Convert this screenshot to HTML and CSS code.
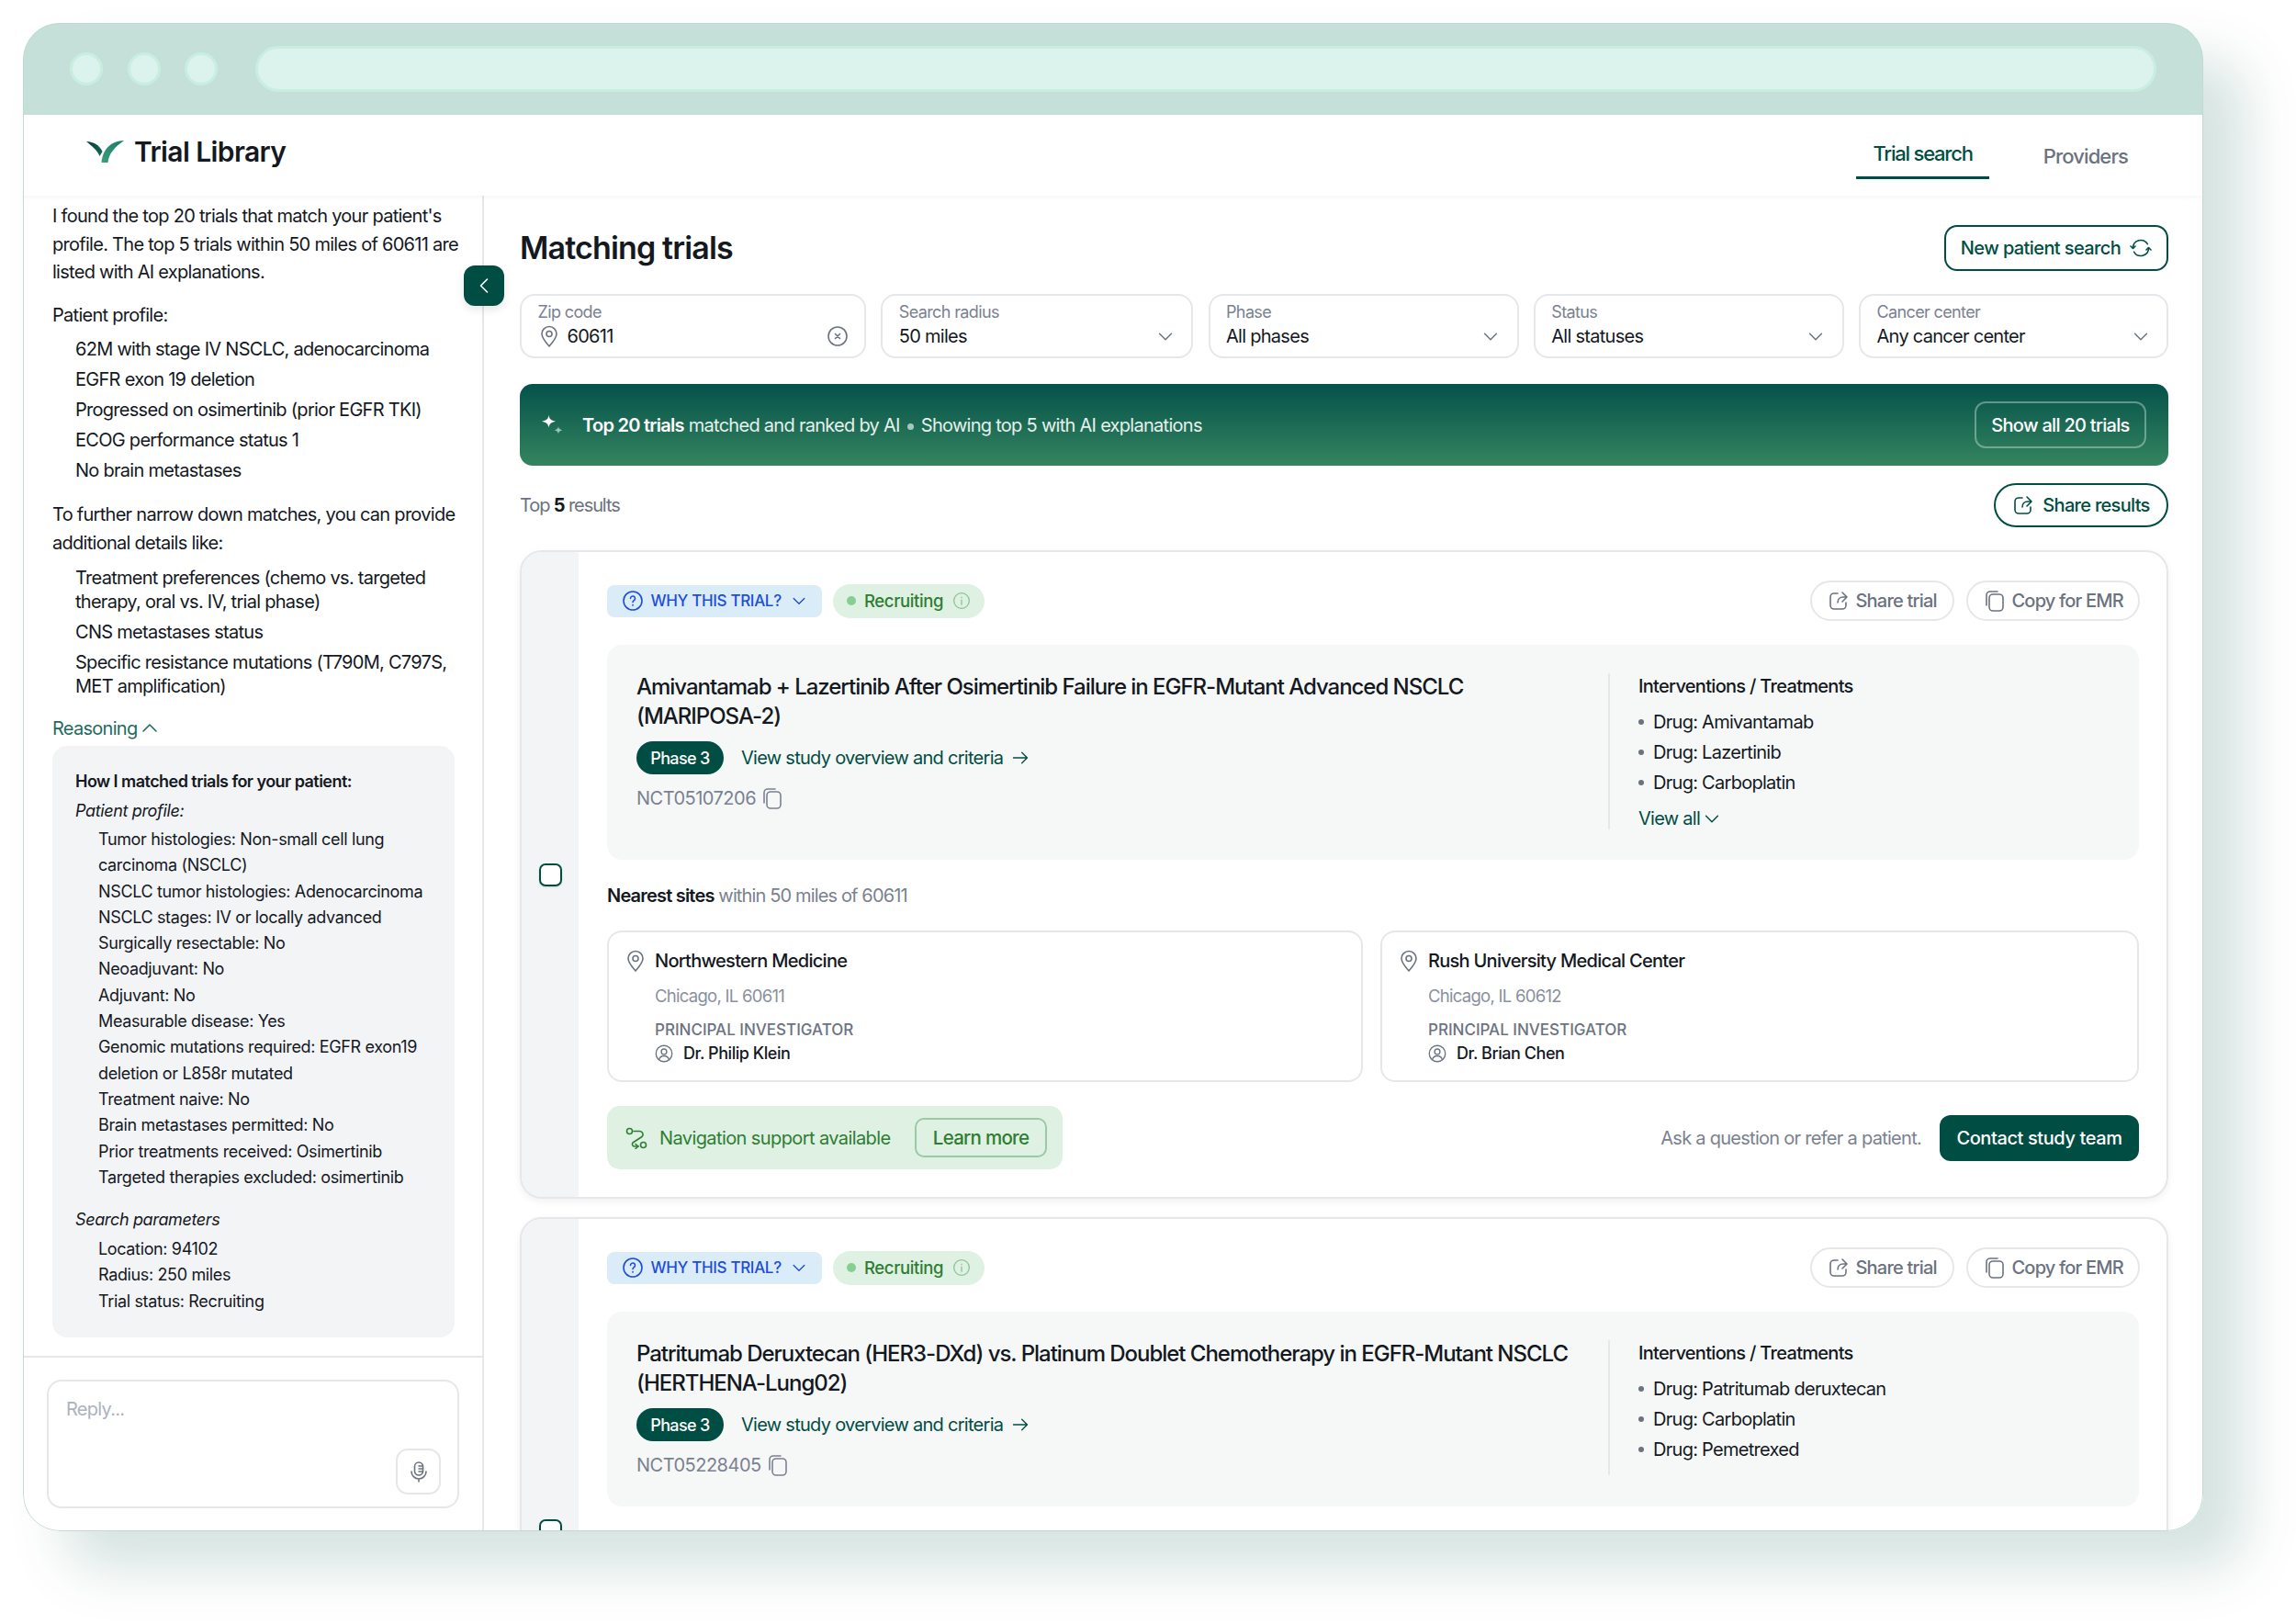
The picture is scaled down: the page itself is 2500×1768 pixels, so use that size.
FILE: index.html
```html
<!DOCTYPE html>
<html lang="en">
<head>
<meta charset="utf-8">
<title>Trial Library</title>
<link rel="stylesheet" href="styles.css">
</head>
<body>
<svg class="sprite" xmlns="http://www.w3.org/2000/svg">
  <symbol id="i-pin" viewBox="0 0 24 24"><path d="M12 23C8 18.500 4 14 4 9.500a8 8 0 0 1 16 0C20 14 16 18.500 12 23z"/><circle cx="12" cy="9.500" r="3"/></symbol>
  <symbol id="i-x" viewBox="0 0 24 24"><circle cx="12" cy="12" r="10"/><path d="M9.500 9.500l5 5M14.500 9.500l-5 5"/></symbol>
  <symbol id="i-chev" viewBox="0 0 24 24"><path d="M5 9l7 7 7-7"/></symbol>
  <symbol id="i-chev-up" viewBox="0 0 24 24"><path d="M5 15l7-7 7 7"/></symbol>
  <symbol id="i-chev-left" viewBox="0 0 24 24"><path d="M15.500 5l-7 7 7 7"/></symbol>
  <symbol id="i-refresh" viewBox="0 0 24 24"><path d="M3.500 12a8.500 8.500 0 0 1 15.800-4.300M20.500 12a8.500 8.500 0 0 1-15.800 4.300"/><path d="M1 10l2.500 2.500L6 10M18 14l2.500-2.500L23 14"/></symbol>
  <symbol id="i-q" viewBox="0 0 24 24"><circle cx="12" cy="12" r="10"/><path d="M9.500 9.500a2.500 2.500 0 1 1 3.800 2.100c-.9.600-1.300 1.100-1.300 2"/><path d="M12 16.500v.6"/></symbol>
  <symbol id="i-info" viewBox="0 0 24 24"><circle cx="12" cy="12" r="10"/><path d="M12 11v6M12 7.500v.5"/></symbol>
  <symbol id="i-share" viewBox="0 0 24 24"><path d="M11 4H7a4 4 0 0 0-4 4v9a4 4 0 0 0 4 4h9a4 4 0 0 0 4-4v-3"/><path d="M21 8l-5-5M21 8l-5 5M21 8h-4c-4 0-6 3-6 6"/></symbol>
  <symbol id="i-copy" viewBox="0 0 24 24"><rect x="6" y="5" width="15" height="18" rx="4"/><path d="M3 17V6a4 4 0 0 1 4-4h8"/></symbol>
  <symbol id="i-user" viewBox="0 0 24 24"><circle cx="12" cy="12" r="10.500"/><circle cx="12" cy="9.500" r="3.500"/><path d="M5.500 20c1-3.500 3.500-5 6.500-5s5.500 1.500 6.500 5"/></symbol>
  <symbol id="i-route" viewBox="0 0 24 24"><circle cx="4.500" cy="4.500" r="3"/><circle cx="19.500" cy="19.500" r="3"/><path d="M9 4.500h6.500a3.500 3.500 0 0 1 2.500 6L8 17a2.500 2.500 0 0 0 1.500 4H14"/><path d="M11 18.500L14 21l-3 2.500"/></symbol>
  <symbol id="i-mic" viewBox="0 0 24 24"><rect x="7.500" y="2" width="9" height="14" rx="4.500"/><path d="M12 6h4.500M12 9h4.500M12 12h4.500"/><path d="M4 12a8 8 0 0 0 16 0M12 20v3"/></symbol>
  <symbol id="i-arrow" viewBox="0 0 24 24"><path d="M3 12h18M14 5l7 7-7 7"/></symbol>
  <symbol id="i-spark" viewBox="0 0 24 24"><path d="M7.500 1c.8 4.200 2.400 5.600 7.500 6.800-5.100 1.200-6.700 2.600-7.500 6.800-.8-4.200-2.400-5.600-7.500-6.800C5.100 6.600 6.700 5.200 7.500 1z"/><path class="spark-small" d="M18 13c.4 2.600 1.200 3.400 4.500 4.300-3.300.9-4.100 1.700-4.500 4.300-.4-2.600-1.200-3.400-4.500-4.300 3.300-.9 4.100-1.700 4.500-4.300z"/></symbol>
</svg>

<div class="page">
  <div class="window">
    <div class="titlebar">
      <span class="dot"></span><span class="dot"></span><span class="dot"></span>
      <span class="urlbar"></span>
    </div>

    <header class="appbar">
      <div class="brand">
        <svg class="logo" viewBox="0 0 41 24" xmlns="http://www.w3.org/2000/svg">
          <defs>
            <linearGradient id="leafA" x1="0" y1="0" x2="1" y2="1"><stop offset="0" stop-color="#0a3f38"/><stop offset="1" stop-color="#0f6a58"/></linearGradient>
            <linearGradient id="leafB" x1="1" y1="0" x2="0" y2="1"><stop offset="0" stop-color="#1a7a64"/><stop offset="1" stop-color="#3e9f7c"/></linearGradient>
          </defs>
          <path fill="url(#leafA)" d="M0 1c8 .5 14.500 4 17.500 11l-3 5C12 10.500 6.500 6.500 0 1z"/>
          <path fill="url(#leafB)" d="M41 0C28 .5 18 8 16.500 24h7C24.500 14 31 7 41 0z"/>
        </svg>
        <span class="brand-name">Trial Library</span>
      </div>
      <nav class="tabs">
        <a class="tab tab-active">Trial search</a>
        <a class="tab tab-muted">Providers</a>
      </nav>
    </header>

    <div class="workspace">
      <aside class="side">
        <div class="side-scroll">
          <p class="msg">I found the top 20 trials that match your patient's<br>profile. The top 5 trials within 50 miles of 60611 are<br>listed with AI explanations.</p>
          <p class="msg msg-gap">Patient profile:</p>
          <ul class="plain-list">
            <li>62M with stage IV NSCLC, adenocarcinoma</li>
            <li>EGFR exon 19 deletion</li>
            <li>Progressed on osimertinib (prior EGFR TKI)</li>
            <li>ECOG performance status 1</li>
            <li>No brain metastases</li>
          </ul>
          <p class="msg msg-gap2">To further narrow down matches, you can provide<br>additional details like:</p>
          <ul class="plain-list plain-list-2">
            <li>Treatment preferences (chemo vs. targeted<br>therapy, oral vs. IV, trial phase)</li>
            <li>CNS metastases status</li>
            <li>Specific resistance mutations (T790M, C797S,<br>MET amplification)</li>
          </ul>
          <div class="reasoning-toggle">Reasoning <svg class="ic ic-24"><use href="#i-chev-up"/></svg></div>
          <div class="reasoning">
            <p class="r-head">How I matched trials for your patient:</p>
            <p class="r-sub">Patient profile:</p>
            <ul class="r-list">
              <li>Tumor histologies: Non-small cell lung<br>carcinoma (NSCLC)</li>
              <li>NSCLC tumor histologies: Adenocarcinoma</li>
              <li>NSCLC stages: IV or locally advanced</li>
              <li>Surgically resectable: No</li>
              <li>Neoadjuvant: No</li>
              <li>Adjuvant: No</li>
              <li>Measurable disease: Yes</li>
              <li>Genomic mutations required: EGFR exon19<br>deletion or L858r mutated</li>
              <li>Treatment naive: No</li>
              <li>Brain metastases permitted: No</li>
              <li>Prior treatments received: Osimertinib</li>
              <li>Targeted therapies excluded: osimertinib</li>
            </ul>
            <p class="r-sub r-sub-gap">Search parameters</p>
            <ul class="r-list r-list-2">
              <li>Location: 94102</li>
              <li>Radius: 250 miles</li>
              <li>Trial status: Recruiting</li>
            </ul>
          </div>
        </div>
        <div class="composer">
          <div class="reply">
            <span class="reply-hint">Reply...</span>
            <button class="mic"><svg class="ic ic-24"><use href="#i-mic"/></svg></button>
          </div>
        </div>
        <button class="collapse"><svg class="ic ic-24"><use href="#i-chev-left"/></svg></button>
      </aside>

      <main class="main">
        <div class="head-row">
          <h1 class="title">Matching trials</h1>
          <button class="btn-outline">New patient search <svg class="ic ic-24"><use href="#i-refresh"/></svg></button>
        </div>

        <div class="filters">
          <div class="filter">
            <span class="f-label">Zip code</span>
            <div class="f-value"><svg class="ic ic-24 ic-grey"><use href="#i-pin"/></svg><span class="f-text">60611</span><svg class="ic ic-24 ic-grey f-end"><use href="#i-x"/></svg></div>
          </div>
          <div class="filter">
            <span class="f-label">Search radius</span>
            <div class="f-value"><span class="f-text">50 miles</span><svg class="ic ic-22 ic-grey f-end"><use href="#i-chev"/></svg></div>
          </div>
          <div class="filter">
            <span class="f-label">Phase</span>
            <div class="f-value"><span class="f-text">All phases</span><svg class="ic ic-22 ic-grey f-end"><use href="#i-chev"/></svg></div>
          </div>
          <div class="filter">
            <span class="f-label">Status</span>
            <div class="f-value"><span class="f-text">All statuses</span><svg class="ic ic-22 ic-grey f-end"><use href="#i-chev"/></svg></div>
          </div>
          <div class="filter">
            <span class="f-label">Cancer center</span>
            <div class="f-value"><span class="f-text">Any cancer center</span><svg class="ic ic-22 ic-grey f-end"><use href="#i-chev"/></svg></div>
          </div>
        </div>

        <div class="banner">
          <svg class="spark" viewBox="0 0 24 24"><use href="#i-spark"/></svg>
          <span class="banner-text"><b>Top 20 trials</b> matched and ranked by AI<i class="sep"></i>Showing top 5 with AI explanations</span>
          <button class="btn-ghost">Show all 20 trials</button>
        </div>

        <div class="results-row">
          <span class="results-count">Top <b>5</b> results</span>
          <button class="btn-pill"><svg class="ic ic-24"><use href="#i-share"/></svg>Share results</button>
        </div>

        <article class="card">
          <div class="strip"><span class="check"></span></div>
          <div class="card-body">
            <div class="card-top">
              <span class="why"><svg class="ic ic-24"><use href="#i-q"/></svg>WHY THIS TRIAL?<svg class="ic ic-20"><use href="#i-chev"/></svg></span>
              <span class="status"><i class="status-dot"></i>Recruiting<svg class="ic ic-20 ic-status"><use href="#i-info"/></svg></span>
              <span class="card-actions">
                <button class="btn-soft btn-share"><svg class="ic ic-24"><use href="#i-share"/></svg>Share trial</button>
                <button class="btn-soft btn-copy"><svg class="ic ic-24"><use href="#i-copy"/></svg>Copy for EMR</button>
              </span>
            </div>
            <section class="study">
              <div class="study-main">
                <h2 class="study-title">Amivantamab + Lazertinib After Osimertinib Failure in EGFR-Mutant Advanced NSCLC<br>(MARIPOSA-2)</h2>
                <div class="study-meta"><span class="phase">Phase 3</span><a class="overview">View study overview and criteria</a><svg class="ic ic-20 ic-green"><use href="#i-arrow"/></svg></div>
                <div class="nct">NCT05107206<svg class="ic ic-24"><use href="#i-copy"/></svg></div>
              </div>
              <div class="study-side">
                <h3 class="side-title">Interventions / Treatments</h3>
                <ul class="drugs">
                  <li>Drug: Amivantamab</li>
                  <li>Drug: Lazertinib</li>
                  <li>Drug: Carboplatin</li>
                </ul>
                <a class="view-all">View all <svg class="ic ic-22"><use href="#i-chev"/></svg></a>
              </div>
            </section>
            <p class="nearest"><b>Nearest sites</b> within 50 miles of 60611</p>
            <div class="sites">
              <div class="site">
                <svg class="ic ic-24 ic-grey"><use href="#i-pin"/></svg>
                <div>
                  <div class="site-name">Northwestern Medicine</div>
                  <div class="site-city">Chicago, IL 60611</div>
                  <div class="site-label">PRINCIPAL INVESTIGATOR</div>
                  <div class="site-pi"><svg class="ic ic-20 ic-grey"><use href="#i-user"/></svg>Dr. Philip Klein</div>
                </div>
              </div>
              <div class="site">
                <svg class="ic ic-24 ic-grey"><use href="#i-pin"/></svg>
                <div>
                  <div class="site-name">Rush University Medical Center</div>
                  <div class="site-city">Chicago, IL 60612</div>
                  <div class="site-label">PRINCIPAL INVESTIGATOR</div>
                  <div class="site-pi"><svg class="ic ic-20 ic-grey"><use href="#i-user"/></svg>Dr. Brian Chen</div>
                </div>
              </div>
            </div>
            <div class="card-foot">
              <div class="nav-support">
                <svg class="ic ic-24"><use href="#i-route"/></svg>
                <span class="nav-text">Navigation support available</span>
                <button class="btn-learn">Learn more</button>
              </div>
              <div class="contact">
                <span class="contact-hint">Ask a question or refer a patient.</span>
                <button class="btn-solid">Contact study team</button>
              </div>
            </div>
          </div>
        </article>

        <article class="card card-clipped">
          <div class="strip"><span class="check"></span></div>
          <div class="card-body">
            <div class="card-top">
              <span class="why"><svg class="ic ic-24"><use href="#i-q"/></svg>WHY THIS TRIAL?<svg class="ic ic-20"><use href="#i-chev"/></svg></span>
              <span class="status"><i class="status-dot"></i>Recruiting<svg class="ic ic-20 ic-status"><use href="#i-info"/></svg></span>
              <span class="card-actions">
                <button class="btn-soft btn-share"><svg class="ic ic-24"><use href="#i-share"/></svg>Share trial</button>
                <button class="btn-soft btn-copy"><svg class="ic ic-24"><use href="#i-copy"/></svg>Copy for EMR</button>
              </span>
            </div>
            <section class="study">
              <div class="study-main">
                <h2 class="study-title">Patritumab Deruxtecan (HER3-DXd) vs. Platinum Doublet Chemotherapy in EGFR-Mutant NSCLC<br>(HERTHENA-Lung02)</h2>
                <div class="study-meta"><span class="phase">Phase 3</span><a class="overview">View study overview and criteria</a><svg class="ic ic-20 ic-green"><use href="#i-arrow"/></svg></div>
                <div class="nct">NCT05228405<svg class="ic ic-24"><use href="#i-copy"/></svg></div>
              </div>
              <div class="study-side study-side-short">
                <h3 class="side-title">Interventions / Treatments</h3>
                <ul class="drugs">
                  <li>Drug: Patritumab deruxtecan</li>
                  <li>Drug: Carboplatin</li>
                  <li>Drug: Pemetrexed</li>
                </ul>
              </div>
            </section>
          </div>
        </article>
      </main>
    </div>
  </div>
</div>
</body>
</html>
```
FILE: styles.css
```css
* { box-sizing: border-box; }
html, body { margin: 0; background: #fff; }
body { font-family: "Inter", "Liberation Sans", sans-serif; color: #14181f; letter-spacing: -0.045em; }
p, h1, h2, h3, ul { margin: 0; padding: 0; }
ul { list-style: none; }
button { font: inherit; letter-spacing: inherit; background: none; border: 0; padding: 0; }
.sprite { display: none; }
symbol { overflow: visible; }

.ic { fill: none; stroke: currentColor; stroke-width: 1.6; stroke-linecap: round; stroke-linejoin: round; flex: none; display: block; }
.ic-20 { width: 20px; height: 20px; }
.ic-22 { width: 22px; height: 22px; }
.ic-24 { width: 24px; height: 24px; }
.ic-grey { color: #6b7280; }
.ic-green { color: #004d43; }

.page { padding: 25px; height: 1768px; width: 2500px; overflow: hidden; }
.window {
  position: relative;
  width: 2374px; height: 1642px; border-radius: 40px; overflow: hidden;
  background: #fff; display: flex; flex-direction: column;
  box-shadow: 45px 40px 60px rgba(0, 90, 70, 0.17);
}
.window::after { content: ""; position: absolute; inset: 0; border: 1px solid #c2d8d1; border-radius: 40px; pointer-events: none; z-index: 3; }

.titlebar { height: 100px; flex: none; background: #c5e0d8; display: flex; align-items: center; gap: 26.5px; padding: 0 51px; }
.dot { width: 36px; height: 36px; border-radius: 50%; background: #dcf2ed; border: 3px solid #c8eee0; flex: none; }
.urlbar { flex: 1; height: 50px; border-radius: 25px; background: #dcf2ed; border: 3px solid #c8eee0; margin-left: 14.5px; }

.appbar { height: 88px; flex: none; display: flex; align-items: center; justify-content: space-between; padding: 0 82px 0 69px; box-shadow: 0 2px 4px rgba(0,0,0,.04); position: relative; z-index: 1; background: #fff; }
.brand { display: flex; align-items: center; gap: 11px; margin-top: -9px; }
.logo { width: 41px; height: 24px; }
.brand-name { font-size: 30px; font-weight: 600; line-height: 40px; letter-spacing: -0.02em; }
.tabs { display: flex; align-items: stretch; height: 88px; gap: 59px; }
.tab { font-size: 22px; display: flex; align-items: center; }
.tab-active { color: #004d43; font-weight: 500; letter-spacing: -0.055em; padding: 16px 18px 0; height: 70px; border-bottom: 3px solid #004d43; }
.tab-muted { color: #6b7280; font-weight: 500; letter-spacing: -0.04em; padding-top: 2px; }

.workspace { flex: 1; display: flex; min-height: 0; }
.side { width: 502px; flex: none; border-right: 2px solid #e5e7eb; display: flex; flex-direction: column; position: relative; }
.side-scroll { flex: 1; min-height: 0; padding: 7px 30px 0 32px; font-size: 20px; }
.msg { line-height: 30.5px; white-space: nowrap; }
.msg-gap { margin-top: 16.5px; }
.msg-gap2 { margin-top: 20.5px; }
.plain-list { margin-top: 8px; padding-left: 25px; }
.plain-list-2 { margin-top: 10px; }
.plain-list li { line-height: 26px; margin-bottom: 7px; white-space: nowrap; }
.plain-list li:last-child { margin-bottom: 0; }
.reasoning-toggle { margin-top: 18px; line-height: 30px; color: #1f6b5f; display: flex; align-items: center; gap: 2px; }
.reasoning { margin-top: 4px; width: 438px; padding: 25px; background: #f3f4f6; border-radius: 16px; font-size: 18px; letter-spacing: -0.02em; }
.r-head { line-height: 28px; font-weight: 600; letter-spacing: -0.03em; }
.r-sub { margin-top: 4px; line-height: 28px; font-style: italic; }
.r-sub-gap { margin-top: 18px; }
.r-list { margin-top: 3px; padding-left: 25px; }
.r-list-2 { margin-top: 4px; }
.r-list li { line-height: 28.3px; white-space: nowrap; }
.composer { flex: none; height: 191px; border-top: 2px solid #e5e7eb; padding: 24px 25px 25px 26px; }
.reply { height: 140px; border: 2px solid #e5e7eb; border-radius: 16px; padding: 17px 19px; position: relative; font-size: 20px; }
.reply-hint { color: #adb2bc; line-height: 26px; display: block; }
.mic { position: absolute; right: 18px; bottom: 13px; width: 49px; height: 50px; border: 2px solid #e5e7eb; border-radius: 13px; display: flex; align-items: center; justify-content: center; color: #6b7280; }
.collapse { position: absolute; right: -24px; top: 76px; width: 44px; height: 44px; border-radius: 12px; background: #004d43; color: #fff; display: flex; align-items: center; justify-content: center; box-shadow: 0 4px 10px rgba(0,0,0,.1); }

.main { flex: 1; min-width: 0; padding: 32px 38px 0 39px; overflow: hidden; }
.head-row { display: flex; justify-content: space-between; align-items: center; height: 50px; }
.title { font-size: 34px; font-weight: 600; line-height: 50px; letter-spacing: -0.025em; }
.btn-outline { height: 50px; width: 244px; border: 2px solid #004d43; border-radius: 14px; color: #004d43; font-size: 20px; font-weight: 500; letter-spacing: -0.03em; display: flex; align-items: center; justify-content: center; gap: 10px; }

.filters { margin-top: 25px; display: grid; grid-template-columns: 377px 340px 338px 338px 1fr; gap: 16.25px; }
.filter { height: 70px; border: 2px solid #e5e7eb; border-radius: 16px; padding: 6px 17.5px 0; display: flex; flex-direction: column; }
.f-label { font-size: 18px; line-height: 24px; color: #7a8190; letter-spacing: -0.035em; }
.f-value { display: flex; align-items: center; height: 26px; margin-top: 1px; gap: 8px; }
.f-text { font-size: 20px; line-height: 26px; }
.f-end { margin-left: auto; }

.banner { margin-top: 28px; height: 89px; border-radius: 14px; background: linear-gradient(180deg, #04524a 0%, #35845f 100%); display: flex; align-items: center; padding: 0 24px; color: #fff; }
.spark { width: 24px; height: 24px; fill: #fff; flex: none; }
.banner-text { font-size: 20px; margin-left: 20px; color: #e6f0ec; }
.banner-text b { font-weight: 600; color: #fff; }
.sep { display: inline-block; width: 7px; height: 7px; border-radius: 50%; background: #a9c8bd; margin: 0 8px 2px 8px; }
.btn-ghost { margin-left: auto; height: 51px; width: 187px; border: 2px solid rgba(255,255,255,.35); border-radius: 12px; color: #fff; font-size: 20px; font-weight: 500; letter-spacing: -0.035em; }
.spark-small { fill: #9fc4b6; }

.results-row { margin-top: 19px; height: 48px; display: flex; align-items: center; justify-content: space-between; }
.results-count { font-size: 20px; color: #6b7280; letter-spacing: -0.055em; }
.results-count b { color: #14181f; font-weight: 700; }
.btn-pill { height: 48px; width: 190px; border: 2px solid #004d43; border-radius: 24px; color: #004d43; font-size: 20px; font-weight: 500; letter-spacing: -0.035em; display: flex; align-items: center; justify-content: center; gap: 9px; }

.card { margin-top: 25px; height: 706px; border: 2px solid #e5e7eb; border-radius: 24px; display: flex; overflow: hidden; box-shadow: 0 3px 8px rgba(0,0,0,.06); background: #fff; }
.card + .card { margin-top: 20px; }
.card-clipped { height: 683px; }
.strip { width: 62px; flex: none; background: #f3f4f6; display: flex; align-items: center; justify-content: center; }
.check { width: 25px; height: 25px; border: 2px solid #004d43; border-radius: 7px; background: #fff; box-shadow: 0 1px 2px rgba(0,0,0,.15); }
.card-body { flex: 1; min-width: 0; padding: 31px 30px 0 31px; }
.card-top { display: flex; align-items: center; height: 44px; }
.why { height: 35px; width: 234px; background: #dbecf9; border-radius: 8px; color: #1d4ed8; font-size: 17px; font-weight: 500; letter-spacing: -0.02em; display: flex; align-items: center; gap: 8px; padding-left: 15.5px; }
.why .ic-20 { margin-left: 1px; }
.status { margin-left: 12px; height: 37px; width: 165px; background: #dff1e3; border-radius: 19px; color: #2e7d32; font-size: 18.5px; font-weight: 500; letter-spacing: -0.02em; display: flex; align-items: center; padding-left: 15px; }
.status-dot { width: 10px; height: 10px; border-radius: 50%; background: #86cf93; margin-right: 9px; }
.ic-status { margin-left: 10px; color: #8bc396; }
.card-actions { margin-left: auto; margin-right: -1px; display: flex; gap: 13px; }
.btn-soft { height: 44px; padding-left: 16.5px; border: 2px solid #e5e7eb; border-radius: 22px; color: #6b7280; font-size: 20px; font-weight: 500; letter-spacing: -0.04em; display: flex; align-items: center; gap: 7px; }
.btn-share { width: 157px; }
.btn-copy { width: 189px; }

.study { margin-top: 26px; padding: 30px 0 33px 32px; background: #f6f8f8; border-radius: 16px; display: flex; align-items: flex-start; }
.study-main { width: 1058px; flex: none; }
.study-title { font-size: 24px; font-weight: 500; line-height: 32px; letter-spacing: -0.043em; white-space: nowrap; }
.study-meta { margin-top: 11px; display: flex; align-items: center; }
.phase { height: 36px; width: 95px; border-radius: 18px; background: #004d43; color: #fff; font-size: 18px; font-weight: 500; letter-spacing: -0.035em; display: flex; align-items: center; justify-content: center; }
.overview { margin-left: 19px; margin-right: 9px; font-size: 20px; color: #004d43; }
.nct { margin-top: 14px; height: 24px; display: flex; align-items: center; gap: 6px; font-size: 20px; color: #7a8190; letter-spacing: -0.025em; }
.study-side { border-left: 2px solid #e5e7eb; padding-left: 31px; margin-top: 1px; height: 170px; }
.study-side-short { height: 147px; }
.side-title { font-size: 20px; font-weight: 500; line-height: 28px; letter-spacing: -0.035em; }
.drugs { margin-top: 9px; }
.drugs li { position: relative; padding-left: 16px; font-size: 20px; line-height: 33px; }
.drugs li::before { content: ""; position: absolute; left: 0; top: 13px; width: 6px; height: 6px; border-radius: 50%; background: #6b7280; }
.view-all { margin-top: 10px; font-size: 20px; line-height: 24px; color: #004d43; display: flex; align-items: center; gap: 2px; }

.nearest { margin-top: 26.5px; line-height: 24px; font-size: 20px; color: #7a8190; letter-spacing: -0.043em; }
.nearest b { color: #14181f; font-weight: 600; letter-spacing: -0.04em; }
.sites { margin-top: 26.5px; display: grid; grid-template-columns: 823px 1fr; gap: 19px; }
.site { height: 165px; border: 2px solid #e5e7eb; border-radius: 16px; display: flex; padding: 19px 0 0 17px; gap: 9px; }
.site-name { font-size: 20px; font-weight: 500; line-height: 24px; }
.site-city { margin-top: 14px; font-size: 18.5px; line-height: 24px; color: #8a909c; }
.site-label { margin-top: 13px; font-size: 17px; font-weight: 500; line-height: 24px; letter-spacing: 0; color: #6b7280; }
.site-pi { margin-top: 2px; display: flex; align-items: center; gap: 11px; font-size: 18px; font-weight: 500; line-height: 24px; letter-spacing: -0.025em; }

.card-foot { margin-top: 26px; display: flex; align-items: center; justify-content: space-between; }
.nav-support { height: 69px; width: 496px; background: #dff1e3; border-radius: 14px; color: #2e7d32; display: flex; align-items: center; padding-left: 20px; }
.nav-text { margin-left: 13px; font-size: 20px; letter-spacing: -0.03em; }
.btn-learn { margin-left: auto; margin-right: 17px; width: 144px; height: 43px; border: 2px solid #9cc9a5; border-radius: 10px; color: #2e7d32; font-size: 20.5px; font-weight: 500; letter-spacing: -0.035em; }
.contact { display: flex; align-items: center; gap: 20px; }
.contact-hint { font-size: 20px; color: #7a8190; }
.btn-solid { width: 217px; height: 50px; border-radius: 12px; background: #004d43; color: #fff; font-size: 20px; font-weight: 500; letter-spacing: -0.02em; }
```
